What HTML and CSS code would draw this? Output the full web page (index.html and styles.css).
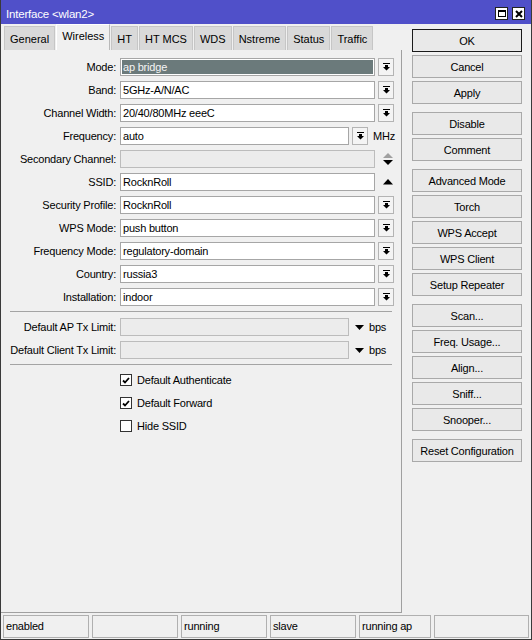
FILE: index.html
```html
<!DOCTYPE html>
<html lang="en">

<head>
  <meta charset="UTF-8" />
  <title>Interface &lt;wlan2&gt;</title>
  <link rel="stylesheet" href="styles.css">
</head>

<body>
  <div class="window">
    <div class="titlebar">
      <span class="title">Interface &lt;wlan2&gt;</span>
      <span class="tb-btn">
        <svg width="8" height="7" viewBox="0 0 8 7"><rect x="0.5" y="0.5" width="7" height="6" fill="none" stroke="#000" /><rect x="0" y="0" width="8" height="2" fill="#000" /></svg>
      </span>
      <span class="tb-btn">
        <svg width="8" height="8" viewBox="0 0 8 8"><path d="M1 1L7 7M7 1L1 7" stroke="#000" stroke-width="2" /></svg>
      </span>
    </div>

    <div class="main">
      <div class="left">
        <div class="tabs">
          <div class="tab">General</div>
          <div class="tab active">Wireless</div>
          <div class="tab">HT</div>
          <div class="tab">HT MCS</div>
          <div class="tab">WDS</div>
          <div class="tab">Nstreme</div>
          <div class="tab">Status</div>
          <div class="tab">Traffic</div>
        </div>

        <div class="panel">
          <div class="row">
            <span class="label">Mode:</span>
            <span class="field selected">ap bridge</span>
            <span class="dd"><svg width="7" height="8" viewBox="0 0 7 8"><rect width="7" height="1" /><path d="M2 2h3v2h2L3.5 7.5 0 4h2z" /></svg></span>
          </div>
          <div class="row">
            <span class="label">Band:</span>
            <span class="field">5GHz-A/N/AC</span>
            <span class="dd"><svg width="7" height="8" viewBox="0 0 7 8"><rect width="7" height="1" /><path d="M2 2h3v2h2L3.5 7.5 0 4h2z" /></svg></span>
          </div>
          <div class="row">
            <span class="label">Channel Width:</span>
            <span class="field">20/40/80MHz eeeC</span>
            <span class="dd"><svg width="7" height="8" viewBox="0 0 7 8"><rect width="7" height="1" /><path d="M2 2h3v2h2L3.5 7.5 0 4h2z" /></svg></span>
          </div>
          <div class="row">
            <span class="label">Frequency:</span>
            <span class="field short">auto</span>
            <span class="dd"><svg width="7" height="8" viewBox="0 0 7 8"><rect width="7" height="1" /><path d="M2 2h3v2h2L3.5 7.5 0 4h2z" /></svg></span>
            <span class="unit">MHz</span>
          </div>
          <div class="row">
            <span class="label">Secondary Channel:</span>
            <span class="field disabled"></span>
            <span class="icon"><svg width="10" height="12" viewBox="0 0 10 12"><path d="M5 0L10 5H0z" fill="#a0a0a0" /><path d="M0 7h10L5 12z" fill="#000" /></svg></span>
          </div>
          <div class="row">
            <span class="label">SSID:</span>
            <span class="field">RocknRoll</span>
            <span class="icon"><svg width="10" height="6" viewBox="0 0 10 6"><path d="M5 0L10 5.5H0z" fill="#000" /></svg></span>
          </div>
          <div class="row">
            <span class="label">Security Profile:</span>
            <span class="field">RocknRoll</span>
            <span class="dd"><svg width="7" height="8" viewBox="0 0 7 8"><rect width="7" height="1" /><path d="M2 2h3v2h2L3.5 7.5 0 4h2z" /></svg></span>
          </div>
          <div class="row">
            <span class="label">WPS Mode:</span>
            <span class="field">push button</span>
            <span class="dd"><svg width="7" height="8" viewBox="0 0 7 8"><rect width="7" height="1" /><path d="M2 2h3v2h2L3.5 7.5 0 4h2z" /></svg></span>
          </div>
          <div class="row">
            <span class="label">Frequency Mode:</span>
            <span class="field">regulatory-domain</span>
            <span class="dd"><svg width="7" height="8" viewBox="0 0 7 8"><rect width="7" height="1" /><path d="M2 2h3v2h2L3.5 7.5 0 4h2z" /></svg></span>
          </div>
          <div class="row">
            <span class="label">Country:</span>
            <span class="field">russia3</span>
            <span class="dd"><svg width="7" height="8" viewBox="0 0 7 8"><rect width="7" height="1" /><path d="M2 2h3v2h2L3.5 7.5 0 4h2z" /></svg></span>
          </div>
          <div class="row">
            <span class="label">Installation:</span>
            <span class="field">indoor</span>
            <span class="dd"><svg width="7" height="8" viewBox="0 0 7 8"><rect width="7" height="1" /><path d="M2 2h3v2h2L3.5 7.5 0 4h2z" /></svg></span>
          </div>

          <div class="sep"></div>

          <div class="row">
            <span class="label">Default AP Tx Limit:</span>
            <span class="field short disabled"></span>
            <span class="down"><svg width="9" height="5" viewBox="0 0 9 5"><path d="M0 0h9L4.5 5z" /></svg></span>
            <span class="unit">bps</span>
          </div>
          <div class="row">
            <span class="label">Default Client Tx Limit:</span>
            <span class="field short disabled"></span>
            <span class="down"><svg width="9" height="5" viewBox="0 0 9 5"><path d="M0 0h9L4.5 5z" /></svg></span>
            <span class="unit">bps</span>
          </div>

          <div class="sep"></div>

          <div class="row check-row">
            <span class="check"><svg width="8" height="7" viewBox="0 0 8 7"><path d="M1 3.5L3 5.5 7 1" fill="none" stroke="#000" stroke-width="1.8" /></svg></span>
            <span>Default Authenticate</span>
          </div>
          <div class="row check-row">
            <span class="check"><svg width="8" height="7" viewBox="0 0 8 7"><path d="M1 3.5L3 5.5 7 1" fill="none" stroke="#000" stroke-width="1.8" /></svg></span>
            <span>Default Forward</span>
          </div>
          <div class="row check-row">
            <span class="check"></span>
            <span>Hide SSID</span>
          </div>
        </div>
      </div>

      <div class="side">
        <button class="default">OK</button>
        <button>Cancel</button>
        <button>Apply</button>

        <button class="group">Disable</button>
        <button>Comment</button>

        <button class="group">Advanced Mode</button>
        <button>Torch</button>
        <button>WPS Accept</button>
        <button>WPS Client</button>
        <button>Setup Repeater</button>

        <button class="group">Scan...</button>
        <button>Freq. Usage...</button>
        <button>Align...</button>
        <button>Sniff...</button>
        <button>Snooper...</button>

        <button class="group">Reset Configuration</button>
      </div>
    </div>

    <div class="statusbar">
      <div class="cell">enabled</div>
      <div class="cell"></div>
      <div class="cell">running</div>
      <div class="cell">slave</div>
      <div class="cell narrow">running ap</div>
      <div class="cell last"></div>
    </div>
  </div>
</body>

</html>
```

FILE: styles.css
```css
* {
  box-sizing: border-box;
}

body {
  margin: 0;
  font-family: "Liberation Sans", Arial, sans-serif;
  font-size: 11px;
  letter-spacing: -0.2px;
  color: #000;
  background-color: #f0f0f0;
}

.window {
  width: 532px;
  height: 640px;
  border: 1px solid #3a3a3a;
  border-top: none;
  background-color: #f0f0f0;
  display: flex;
  flex-direction: column;
}

/* title bar */
.titlebar {
  height: 24px;
  flex-shrink: 0;
  background-color: #5050c9;
  color: #fff;
  display: flex;
  align-items: center;
  padding: 3px 6px 0 5px;
  font-size: 11.5px;
}

.title {
  flex: 1;
}

.tb-btn {
  width: 13px;
  height: 13px;
  margin-left: 4px;
  background-color: #fff;
  border: 1px solid #222;
  display: flex;
  align-items: center;
  justify-content: center;
}

.main {
  flex: 1;
  display: flex;
  min-height: 0;
}

.left {
  width: 401px;
  display: flex;
  flex-direction: column;
}

/* tabs */
.tabs {
  height: 26px;
  display: flex;
  align-items: flex-end;
  gap: 1px;
  padding-left: 3px;
}

.tab {
  height: 24px;
  line-height: 24px;
  padding: 0 5px;
  letter-spacing: 0;
  background-color: #d9d9d9;
  border: 1px solid #c6c6c6;
  border-bottom: none;
}

.tab.active {
  height: 26px;
  line-height: 23px;
  background-color: #f0f0f0;
  border-color: #fff #b9b9b9 #f0f0f0 #fff;
}

/* form panel */
.panel {
  flex: 1;
  border-right: 1px solid #a0a0a0;
  border-bottom: 1px solid #a0a0a0;
  padding-top: 8px;
}

.row {
  display: flex;
  align-items: center;
  height: 18px;
  margin-bottom: 5px;
}

.label {
  width: 115px;
  margin-right: 4px;
  text-align: right;
  white-space: nowrap;
}

.field {
  width: 255px;
  height: 18px;
  line-height: 16px;
  padding-left: 2px;
  background-color: #fff;
  border: 1px solid #a6a6a6;
  white-space: nowrap;
}

.field.short {
  width: 229px;
}

.field.disabled {
  background-color: #ececec;
  border-color: #bcbcbc;
}

.field.selected {
  background-color: #6b7a7b;
  color: #f4f4f4;
  box-shadow: inset 0 0 0 1px #fff;
}

.dd {
  width: 16px;
  height: 18px;
  margin-left: 3px;
  background-color: #f4f4f4;
  border: 1px solid #b4b4b4;
  display: flex;
  align-items: center;
  justify-content: center;
}

.icon {
  width: 16px;
  height: 18px;
  margin-left: 3px;
  display: flex;
  align-items: center;
  justify-content: center;
  padding-left: 4px;
}

.down {
  margin-left: 6px;
  display: flex;
  align-items: center;
}

.unit {
  margin-left: 5px;
}

.sep {
  height: 1px;
  width: 382px;
  margin: 1px 0 6px 9px;
  background-color: #a4a4a4;
}

.check-row {
  padding-left: 119px;
}

.check {
  width: 12px;
  height: 12px;
  margin-right: 5px;
  background-color: #fff;
  border: 1px solid #333;
  display: flex;
  align-items: center;
  justify-content: center;
}

/* button column */
.side {
  flex: 1;
  padding: 5px 0 0 10px;
  display: flex;
  flex-direction: column;
  align-items: flex-start;
}

button {
  width: 110px;
  height: 23px;
  margin-bottom: 3px;
  padding: 0;
  font-family: inherit;
  font-size: 11px;
  letter-spacing: inherit;
  color: #000;
  background-color: #e9e9e9;
  border: 1px solid #a9a9a9;
  border-radius: 0;
}

button.default {
  border-color: #1a1a1a;
}

button.group {
  margin-top: 5px;
}

/* status bar */
.statusbar {
  height: 26px;
  flex-shrink: 0;
  display: flex;
  gap: 3px;
  padding: 2px 2px 1px 2px;
}

.cell {
  width: 86px;
  height: 23px;
  line-height: 21px;
  padding-left: 2px;
  border: 1px solid #b0b0b0;
}

.cell.narrow {
  width: 72px;
}

.cell.last {
  flex: 1;
}
```
